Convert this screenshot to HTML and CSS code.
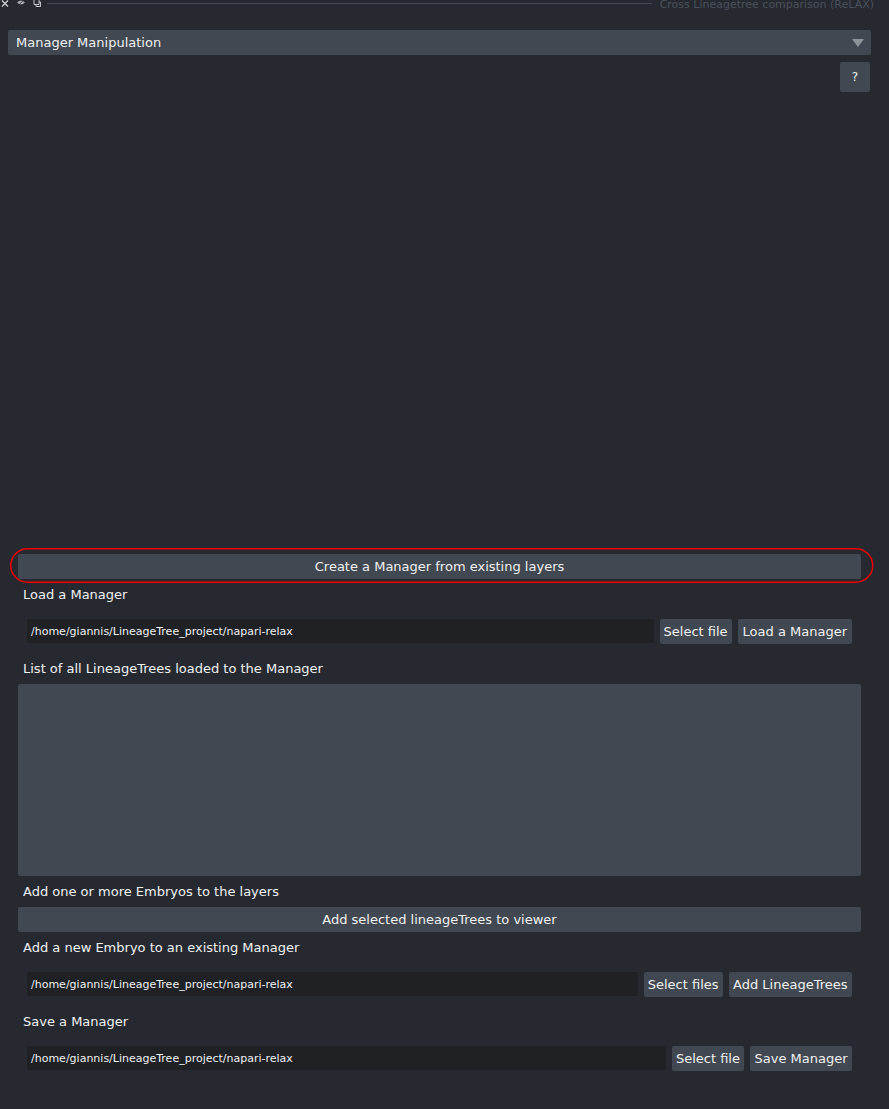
FILE: index.html
```html
<!DOCTYPE html>
<html lang="en">
<head>
    <meta charset="UTF-8">
    <meta name="viewport" content="width=device-width, initial-scale=1.0">
    <title>Cross Lineagetree comparison (ReLAX)</title>
    <link rel="stylesheet" href="styles.css">
</head>
<body>
    <div class="page">
        <div class="titlebar">
            <svg class="title-icon" viewBox="0 0 8 8"><path d="M1 0.5 L7 6.5 M7 0.5 L1 6.5"/></svg>
            <svg class="title-icon icon-eye" viewBox="0 0 8 8"><path d="M0 2.5 Q4 -1.5 8 2.5 Q4 6.5 0 2.5 Z"/><path class="slash" d="M1.5 5.5 L6.5 0"/></svg>
            <svg class="title-icon" viewBox="0 0 8 8"><path class="thin" d="M1 -1 H6 V4.5 H1 Z"/><path class="thin" d="M3 4.5 V6.5 H7.5 V2 H6"/></svg>
            <div class="title-line"></div>
            <div class="title-text">Cross Lineagetree comparison (ReLAX)</div>
        </div>

        <div class="combo">
            <span>Manager Manipulation</span>
            <span class="combo-arrow"></span>
        </div>

        <div class="help-row">
            <button class="btn help-btn">?</button>
        </div>

        <div class="spacer"></div>

        <div class="content">
            <div class="highlight-wrap">
                <button class="btn wide">Create a Manager from existing layers</button>
                <svg class="highlight" width="864" height="36" viewBox="0 0 864 36">
                    <rect x="0.75" y="0.75" width="862" height="33.5" rx="16.75"/>
                </svg>
            </div>

            <div class="label">Load a Manager</div>
            <div class="file-row">
                <div class="path">/home/giannis/LineageTree_project/napari-relax</div>
                <button class="btn">Select file</button>
                <button class="btn btn-load">Load a Manager</button>
            </div>

            <div class="label">List of all LineageTrees loaded to the Manager</div>
            <div class="tree-list"></div>

            <div class="label">Add one or more Embryos to the layers</div>
            <button class="btn wide">Add selected lineageTrees to viewer</button>

            <div class="label">Add a new Embryo to an existing Manager</div>
            <div class="file-row">
                <div class="path">/home/giannis/LineageTree_project/napari-relax</div>
                <button class="btn">Select files</button>
                <button class="btn btn-action">Add LineageTrees</button>
            </div>

            <div class="label">Save a Manager</div>
            <div class="file-row">
                <div class="path">/home/giannis/LineageTree_project/napari-relax</div>
                <button class="btn">Select file</button>
                <button class="btn btn-action">Save Manager</button>
            </div>
        </div>
    </div>
</body>
</html>
```

FILE: styles.css
```css
body {
    margin: 0;
    background-color: #262930;
    color: #f0f1f2;
    font-family: "DejaVu Sans", sans-serif;
    font-size: 13px;
}

.page {
    display: flex;
    flex-direction: column;
    height: 1109px;
    overflow: hidden;
}

/* Title bar, cut off at the top of the window */
.titlebar {
    display: flex;
    align-items: flex-start;
    height: 10px;
    padding: 0 15px 0 1px;
    overflow: hidden;
    flex-shrink: 0;
}

.title-icon {
    width: 8px;
    height: 8px;
    margin-right: 8px;
    flex-shrink: 0;
    fill: #b4b7bb;
    stroke: #d6d8da;
    stroke-width: 1.1;
}

.title-icon .thin {
    fill: none;
    stroke-width: 0.9;
}

.icon-eye {
    fill: #a5a9ae;
    stroke: none;
}

.icon-eye .slash {
    stroke: #262930;
    stroke-width: 0.7;
}

.title-line {
    flex: 1;
    height: 1px;
    margin: 3px 8px 0 -2px;
    background-color: #414851;
}

.title-text {
    margin-top: -2px;
    color: #4a515b;
    font-size: 11px;
    line-height: 14px;
    white-space: nowrap;
}

.combo {
    display: flex;
    align-items: center;
    justify-content: space-between;
    height: 25px;
    margin: 20px 18px 0 8px;
    padding: 0 7px 0 8px;
    background-color: #414851;
    border-radius: 2px;
}

.combo-arrow {
    width: 0;
    height: 0;
    border-left: 6.5px solid transparent;
    border-right: 6.5px solid transparent;
    border-top: 8px solid #8f949a;
}

.help-row {
    display: flex;
    justify-content: flex-end;
    margin-top: 7px;
    padding-right: 19px;
}

.btn {
    height: 25px;
    padding: 0 4px;
    border: none;
    border-radius: 2px;
    background-color: #414851;
    color: #f0f1f2;
    font-family: inherit;
    font-size: 13px;
    white-space: nowrap;
}

.btn-action {
    padding: 0 4.5px;
}

.btn-load {
    padding: 0 5px;
}

.help-btn {
    width: 30px;
    height: 30px;
    padding: 0;
    font-size: 12px;
}

.spacer {
    flex: 1;
}

.content {
    display: flex;
    flex-direction: column;
    padding: 0 28px 29px 18px;
}

.highlight-wrap {
    position: relative;
    display: flex;
    flex-direction: column;
}

/* Red annotation drawn over the button */
.highlight {
    position: absolute;
    top: -6px;
    left: -8px;
    fill: none;
    stroke: #f00000;
    stroke-width: 1.5;
}

.wide {
    width: 100%;
}

.label {
    display: flex;
    align-items: center;
    height: 30px;
    margin-bottom: 1px;
    padding-left: 5px;
}

.file-row {
    display: flex;
    align-items: flex-start;
    gap: 6px;
    margin: 9px 0;
    padding: 0 9px;
}

.path {
    flex: 1;
    height: 24px;
    line-height: 25px;
    padding-left: 4px;
    background-color: #1f2125;
    border-radius: 2px;
    font-size: 11px;
}

.tree-list {
    height: 192px;
    background-color: #414851;
    border-radius: 2px;
}
```
